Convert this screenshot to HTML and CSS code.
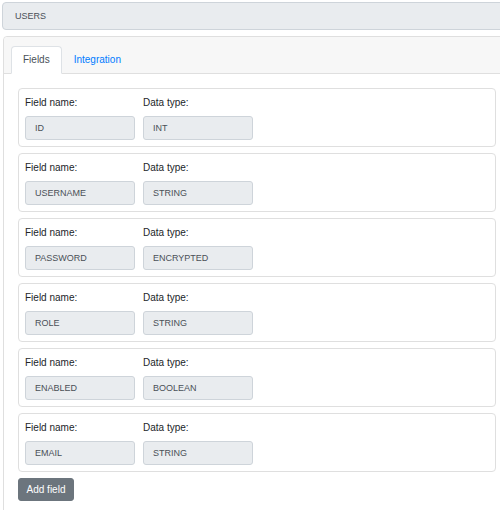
FILE: index.html
```html
<!DOCTYPE html>
<html>
<head>
<meta charset="utf-8">
<link rel="stylesheet" href="styles.css">
</head>
<body>
<div class="page">
  <div class="title-bar">USERS</div>
  <div class="outer-card">
    <div class="outer-header">
      <ul class="tabs">
        <li class="tab active">Fields</li>
        <li class="tab link">Integration</li>
      </ul>
    </div>
    <div class="outer-body">
      <div class="field-card">
        <div class="col"><div class="lbl">Field name:</div><div class="inp">ID</div></div>
        <div class="col"><div class="lbl">Data type:</div><div class="inp">INT</div></div>
      </div>
      <div class="field-card">
        <div class="col"><div class="lbl">Field name:</div><div class="inp">USERNAME</div></div>
        <div class="col"><div class="lbl">Data type:</div><div class="inp">STRING</div></div>
      </div>
      <div class="field-card">
        <div class="col"><div class="lbl">Field name:</div><div class="inp">PASSWORD</div></div>
        <div class="col"><div class="lbl">Data type:</div><div class="inp">ENCRYPTED</div></div>
      </div>
      <div class="field-card">
        <div class="col"><div class="lbl">Field name:</div><div class="inp">ROLE</div></div>
        <div class="col"><div class="lbl">Data type:</div><div class="inp">STRING</div></div>
      </div>
      <div class="field-card">
        <div class="col"><div class="lbl">Field name:</div><div class="inp">ENABLED</div></div>
        <div class="col"><div class="lbl">Data type:</div><div class="inp">BOOLEAN</div></div>
      </div>
      <div class="field-card">
        <div class="col"><div class="lbl">Field name:</div><div class="inp">EMAIL</div></div>
        <div class="col"><div class="lbl">Data type:</div><div class="inp">STRING</div></div>
      </div>
      <button class="btn">Add field</button>
    </div>
  </div>
</div>
</body>
</html>
```

FILE: styles.css
```css
html, body {
  margin: 0;
  padding: 0;
  background: #fff;
  overflow: hidden;
}
body {
  font-family: "Liberation Sans", Arial, sans-serif;
  color: #212529;
}
.page {
  width: 512px;
  padding-top: 2px;
}
.title-bar {
  margin-left: 2px;
  height: 26px;
  box-sizing: content-box;
  border: 1px solid #ced4da;
  border-radius: 4px;
  background: #e9ecef;
  color: #495057;
  font-size: 9px;
  line-height: 26px;
  padding-left: 12px;
}
.outer-card {
  margin-top: 6px;
  margin-left: 3px;
  border: 1px solid #dfdfdf;
  border-radius: 4px;
  background: #fff;
  height: 520px;
}
.outer-header {
  background: #f7f7f7;
  border-bottom: 1px solid #dfdfdf;
  padding: 9px 0 0 7px;
  border-radius: 4px 4px 0 0;
}
.tabs {
  list-style: none;
  margin: 0 0 -1px 0;
  padding: 0;
  display: flex;
}
.tab {
  font-size: 10px;
  height: 25px;
  line-height: 25px;
  padding: 0 11px;
  border: 1px solid transparent;
  border-radius: 4px 4px 0 0;
  margin-bottom: 0;
}
.tab.active {
  background: #fff;
  border-color: #dee2e6 #dee2e6 #fff;
  color: #495057;
  height: 26px;
}
.tab.link {
  color: #007bff;
}
.outer-body {
  padding: 14px 0 0 14px;
  width: 478px;
}
.field-card {
  border: 1px solid #dfdfdf;
  border-radius: 4px;
  padding: 7px 6px 6px;
  margin-bottom: 6px;
  display: flex;
  gap: 8px;
}
.col {
  width: 110px;
}
.lbl {
  font-size: 10px;
  line-height: 14px;
  margin-bottom: 6px;
}
.inp {
  height: 22px;
  border: 1px solid #ced4da;
  border-radius: 3px;
  background: #e9ecef;
  color: #495057;
  font-size: 9px;
  line-height: 22px;
  padding-left: 9px;
}
.btn {
  margin-top: 4px;
  display: block;
  background: #6c757d;
  color: #fff;
  border: 1px solid #6c757d;
  border-radius: 3px;
  font-family: "Liberation Sans", Arial, sans-serif;
  font-size: 10px;
  height: 23px;
  width: 56px;
  padding: 0;
  line-height: 21px;
}
```
